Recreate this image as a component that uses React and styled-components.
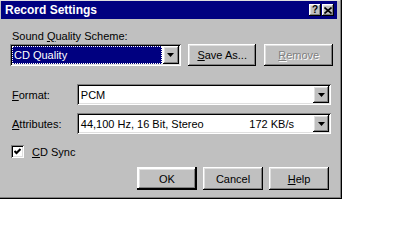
import React from 'react';
import styled, { createGlobalStyle } from 'styled-components';

const Global = createGlobalStyle`
  body {
    margin: 0;
    background: #ffffff;
    font-family: "Liberation Sans", Arial, sans-serif;
  }
`;

const raised = `
  box-shadow: inset -1px -1px #000000, inset 1px 1px #ffffff,
    inset -2px -2px #808080, inset 2px 2px #dfdfdf;
`;

const sunken = `
  box-shadow: inset 1px 1px #808080, inset -1px -1px #ffffff,
    inset 2px 2px #000000, inset -2px -2px #dfdfdf;
`;

const Window = styled.div`
  box-sizing: border-box;
  width: 342px;
  height: 199px;
  padding: 1px 5px 0 1px;
  background: #c0c0c0;
  box-shadow: inset -1px -1px #000000, inset -2px -2px #808080,
    inset 0 1px #dfdfdf;
  display: flex;
  flex-direction: column;
  font-size: 11px;
  color: #000000;
`;

const TitleBar = styled.div`
  height: 18px;
  background: #000080;
  display: flex;
  align-items: center;
  justify-content: space-between;
  padding: 0 3px 0 4px;
`;

const TitleText = styled.span`
  color: #ffffff;
  font-weight: bold;
  font-size: 12px;
`;

const TitleButtons = styled.div`
  display: flex;
  gap: 1px;
`;

const TitleButton = styled.div`
  width: 12px;
  height: 12px;
  background: #c0c0c0;
  ${raised}
  display: flex;
  align-items: center;
  justify-content: center;
  font-weight: bold;
  font-size: 10px;
  line-height: 12px;
`;

const Content = styled.div`
  padding: 0 4px 0 9px;
  display: flex;
  flex-direction: column;
`;

const Label = styled.div`
  line-height: 13px;
  margin-top: ${p => p.$top || 0}px;
  padding-left: 2px;
  white-space: nowrap;
`;

const SchemeRow = styled.div`
  display: flex;
  margin-top: 1px;
  height: 22px;
`;

const Combo = styled.div`
  box-sizing: border-box;
  width: ${p => p.$width}px;
  height: ${p => p.$height}px;
  background: #ffffff;
  ${sunken}
  padding: 2px;
  display: flex;
  align-items: stretch;
  gap: 1px;
`;

const Selected = styled.div`
  flex: 1;
  background: #000080;
  color: #ffffff;
  outline: 1px dotted #ffffff;
  outline-offset: -1px;
  display: flex;
  align-items: center;
  padding-left: 2px;
`;

const ComboValue = styled.div`
  flex: 1;
  display: flex;
  align-items: center;
  justify-content: space-between;
  padding: 0 18px 0 2px;
  white-space: nowrap;
`;

const ArrowButton = styled.div`
  width: 16px;
  background: #c0c0c0;
  ${raised}
  display: flex;
  align-items: center;
  justify-content: center;
`;

const Button = styled.div`
  box-sizing: border-box;
  width: ${p => p.$width || 60}px;
  height: ${p => p.$height || 23}px;
  margin-left: ${p => p.$gap || 0}px;
  background: #c0c0c0;
  ${raised}
  ${p => p.$default && `
    box-shadow: inset -2px -2px #000000, inset 2px 2px #ffffff,
      inset -3px -3px #808080, inset 3px 3px #dfdfdf, inset 0 0 0 1px #000000;
  `}
  color: ${p => (p.$disabled ? '#808080' : '#000000')};
  text-shadow: ${p => (p.$disabled ? '1px 1px #ffffff' : 'none')};
  display: flex;
  align-items: center;
  justify-content: center;
  white-space: nowrap;
`;

const FieldRow = styled.div`
  display: flex;
  align-items: center;
  margin-top: ${p => p.$top}px;
  padding-right: 2px;
`;

const FieldLabel = styled.div`
  width: 67px;
  padding-left: 2px;
  box-sizing: border-box;
`;

const CheckRow = styled.div`
  display: flex;
  align-items: center;
  margin-top: 11px;
  height: 13px;
  padding-left: 1px;
`;

const CheckBox = styled.div`
  box-sizing: border-box;
  width: 13px;
  height: 13px;
  background: #ffffff;
  ${sunken}
  display: flex;
  align-items: center;
  justify-content: center;
`;

const CheckLabel = styled.span`
  margin-left: 8px;
`;

const ButtonRow = styled.div`
  display: flex;
  justify-content: flex-end;
  margin-top: 9px;
  padding-right: 4px;
`;

const Arrow = () => (
  <svg width="7" height="4" viewBox="0 0 7 4">
    <path d="M0 0h7L3.5 4z" fill="#000" />
  </svg>
);

const Dropdown = ({ width, height, children }) => (
  <Combo $width={width} $height={height}>
    <ComboValue>{children}</ComboValue>
    <ArrowButton>
      <Arrow />
    </ArrowButton>
  </Combo>
);

export default function App() {
  return (
    <>
      <Global />
      <Window>
        <TitleBar>
          <TitleText>Record Settings</TitleText>
          <TitleButtons>
            <TitleButton>?</TitleButton>
            <TitleButton>
              <svg width="8" height="7" viewBox="0 0 8 7">
                <path d="M0.5 0.5l7 6M7.5 0.5l-7 6" stroke="#000" strokeWidth="1.6" />
              </svg>
            </TitleButton>
          </TitleButtons>
        </TitleBar>
        <Content>
          <Label $top={11}>
            Sound <u>Q</u>uality Scheme:
          </Label>
          <SchemeRow>
            <Combo $width={172} $height={22}>
              <Selected>CD Quality</Selected>
              <ArrowButton>
                <Arrow />
              </ArrowButton>
            </Combo>
            <Button $width={69} $height={22} $gap={7}>
              <span>
                <u>S</u>ave As...
              </span>
            </Button>
            <Button $width={69} $height={22} $gap={8} $disabled>
              <span>
                <u>R</u>emove
              </span>
            </Button>
          </SchemeRow>
          <FieldRow $top={18}>
            <FieldLabel>
              <u>F</u>ormat:
            </FieldLabel>
            <Dropdown width={255} height={21}>
              <span>PCM</span>
            </Dropdown>
          </FieldRow>
          <FieldRow $top={8}>
            <FieldLabel>
              <u>A</u>ttributes:
            </FieldLabel>
            <Dropdown width={255} height={21}>
              <span>44,100 Hz, 16 Bit, Stereo</span>
              <span>172 KB/s</span>
            </Dropdown>
          </FieldRow>
          <CheckRow>
            <CheckBox>
              <svg width="7" height="7" viewBox="0 0 7 7">
                <path d="M0.5 3l2 2l4-4" stroke="#000" strokeWidth="2" fill="none" />
              </svg>
            </CheckBox>
            <CheckLabel>
              <u>C</u>D Sync
            </CheckLabel>
          </CheckRow>
          <ButtonRow>
            <Button $default>OK</Button>
            <Button $gap={6}>Cancel</Button>
            <Button $gap={6}>
              <span>
                <u>H</u>elp
              </span>
            </Button>
          </ButtonRow>
        </Content>
      </Window>
    </>
  );
}
